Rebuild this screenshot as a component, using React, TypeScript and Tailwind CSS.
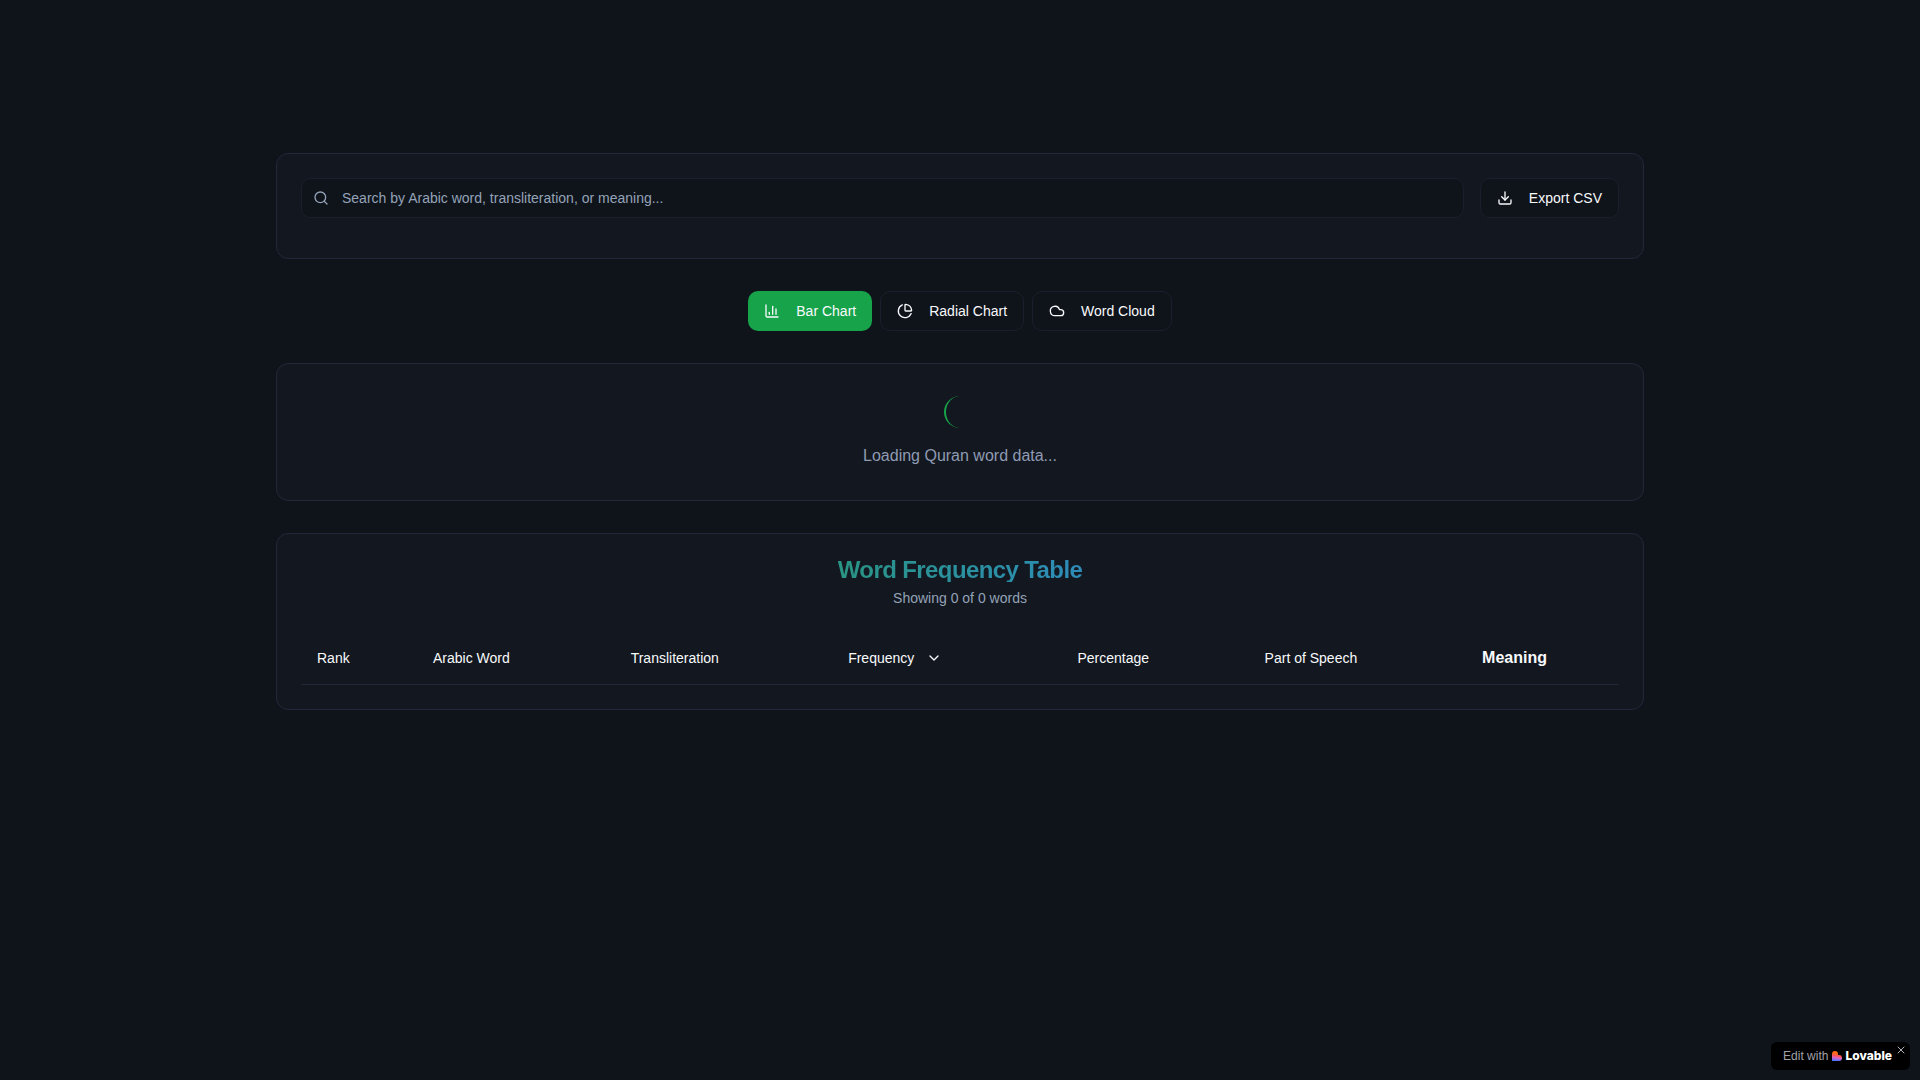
import { useState } from "react";
import {
  ChartColumn,
  ChevronDown,
  Cloud,
  Download,
  PieChart,
  Search,
  X,
  type LucideIcon,
} from "lucide-react";

type ChartType = "bar" | "radial" | "cloud";

const chartTypes: { id: ChartType; label: string; icon: LucideIcon }[] = [
  { id: "bar", label: "Bar Chart", icon: ChartColumn },
  { id: "radial", label: "Radial Chart", icon: PieChart },
  { id: "cloud", label: "Word Cloud", icon: Cloud },
];

const sortableColumns = [
  { name: "Rank", width: "w-[8.8%]" },
  { name: "Arabic Word", width: "w-[15%]" },
  { name: "Transliteration", width: "w-[16.5%]" },
  { name: "Frequency", width: "w-[17.4%]" },
  { name: "Percentage", width: "w-[14.2%]" },
  { name: "Part of Speech", width: "w-[16.5%]" },
];

const card = "rounded-xl border border-[#22283a] bg-[#13171f]";
const outline = "border border-[#1b1f2d] bg-[#0f131a]";

function SearchPanel() {
  const [query, setQuery] = useState("");

  return (
    <section className={`${card} p-6`}>
      <div className="flex items-center gap-4 pb-4">
        <div className="relative flex-1">
          <Search className="absolute left-3 top-3 h-4 w-4 text-[#94a3b8]" />
          <input
            type="text"
            aria-label="Search words"
            placeholder="Search by Arabic word, transliteration, or meaning..."
            value={query}
            onChange={(e) => setQuery(e.target.value)}
            className={`${outline} block h-10 w-full rounded-[10px] pl-10 pr-3 text-sm placeholder:text-[#94a3b8]`}
          />
        </div>
        <button
          className={`${outline} flex h-10 items-center gap-4 rounded-[10px] px-4 text-sm`}
        >
          <Download className="h-4 w-4" />
          Export CSV
        </button>
      </div>
    </section>
  );
}

function ChartTabs() {
  const [active, setActive] = useState<ChartType>("bar");

  return (
    <div className="flex flex-wrap justify-center gap-2">
      {chartTypes.map(({ id, label, icon: Icon }) => (
        <button
          key={id}
          onClick={() => setActive(id)}
          className={`flex h-10 items-center gap-4 rounded-[10px] px-4 text-sm ${
            active === id ? "bg-[#16a34a]" : outline
          }`}
        >
          <Icon className="h-4 w-4" />
          {label}
        </button>
      ))}
    </div>
  );
}

function LoadingPanel() {
  return (
    <section className={`${card} flex flex-col items-center gap-4 p-8`}>
      <div className="h-8 w-8 rotate-90 rounded-full border-b-2 border-[#16a34a]" />
      <p className="text-[#8f9bb3]">Loading Quran word data...</p>
    </section>
  );
}

function WordTable() {
  return (
    <section className={`${card} p-6`}>
      <div className="flex flex-col items-center gap-1.5 pb-6 text-center">
        <h2 className="bg-gradient-to-r from-[#2a9484] to-[#2e8cb8] bg-clip-text text-2xl/6 font-semibold tracking-tight text-transparent">
          Word Frequency Table
        </h2>
        <p className="text-sm text-[#94a3b8]">Showing 0 of 0 words</p>
      </div>
      <table className="w-full text-left">
        <thead>
          <tr className="border-b border-[#22283a]">
            {sortableColumns.map(({ name, width }) => (
              <th key={name} className={`${width} px-4 py-3.5 font-normal`}>
                <button className="flex items-center gap-3 text-sm whitespace-nowrap">
                  {name}
                  {name === "Frequency" && <ChevronDown className="h-4 w-4" />}
                </button>
              </th>
            ))}
            <th className="px-4 py-3.5 font-bold">Meaning</th>
          </tr>
        </thead>
        <tbody />
      </table>
    </section>
  );
}

function LovableBadge() {
  return (
    <div className="fixed bottom-2.5 right-2.5 flex h-7 items-center rounded-md bg-black pl-3 pr-[18px]">
      <a href="#" className="flex items-center gap-1 text-xs text-[#a1a1aa]">
        Edit with
        <span className="flex items-center gap-[3px] text-white">
          <svg viewBox="0 0 10 10" className="h-2.5 w-2.5" aria-hidden="true">
            <defs>
              <linearGradient id="heart" x1="0.6" y1="0" x2="0.45" y2="1">
                <stop offset="0.3" stopColor="#ff6a1a" />
                <stop offset="0.5" stopColor="#ff5560" />
                <stop offset="0.7" stopColor="#d665c8" />
                <stop offset="1" stopColor="#4b73ff" />
              </linearGradient>
            </defs>
            <path
              d="M0 3a3 3 0 0 1 6 0v.9h1a3 3 0 0 1 0 6.1H0z"
              fill="url(#heart)"
            />
          </svg>
          <span className="font-['Inter'] text-xs font-extrabold">
            Lovable
          </span>
        </span>
      </a>
      <button
        aria-label="Close"
        className="absolute right-[3px] top-0.5 text-[#b4b4bc]"
      >
        <X className="h-3 w-3" />
      </button>
    </div>
  );
}

export default function App() {
  return (
    <div className="min-h-screen bg-[#0f131a] font-['Liberation_Sans',sans-serif] text-[#f8fafc]">
      <header className="h-[121px]" />
      <main className="mx-auto flex max-w-[1400px] flex-col gap-8 px-4 py-8">
        <SearchPanel />
        <ChartTabs />
        <LoadingPanel />
        <WordTable />
      </main>
      <LovableBadge />
    </div>
  );
}
